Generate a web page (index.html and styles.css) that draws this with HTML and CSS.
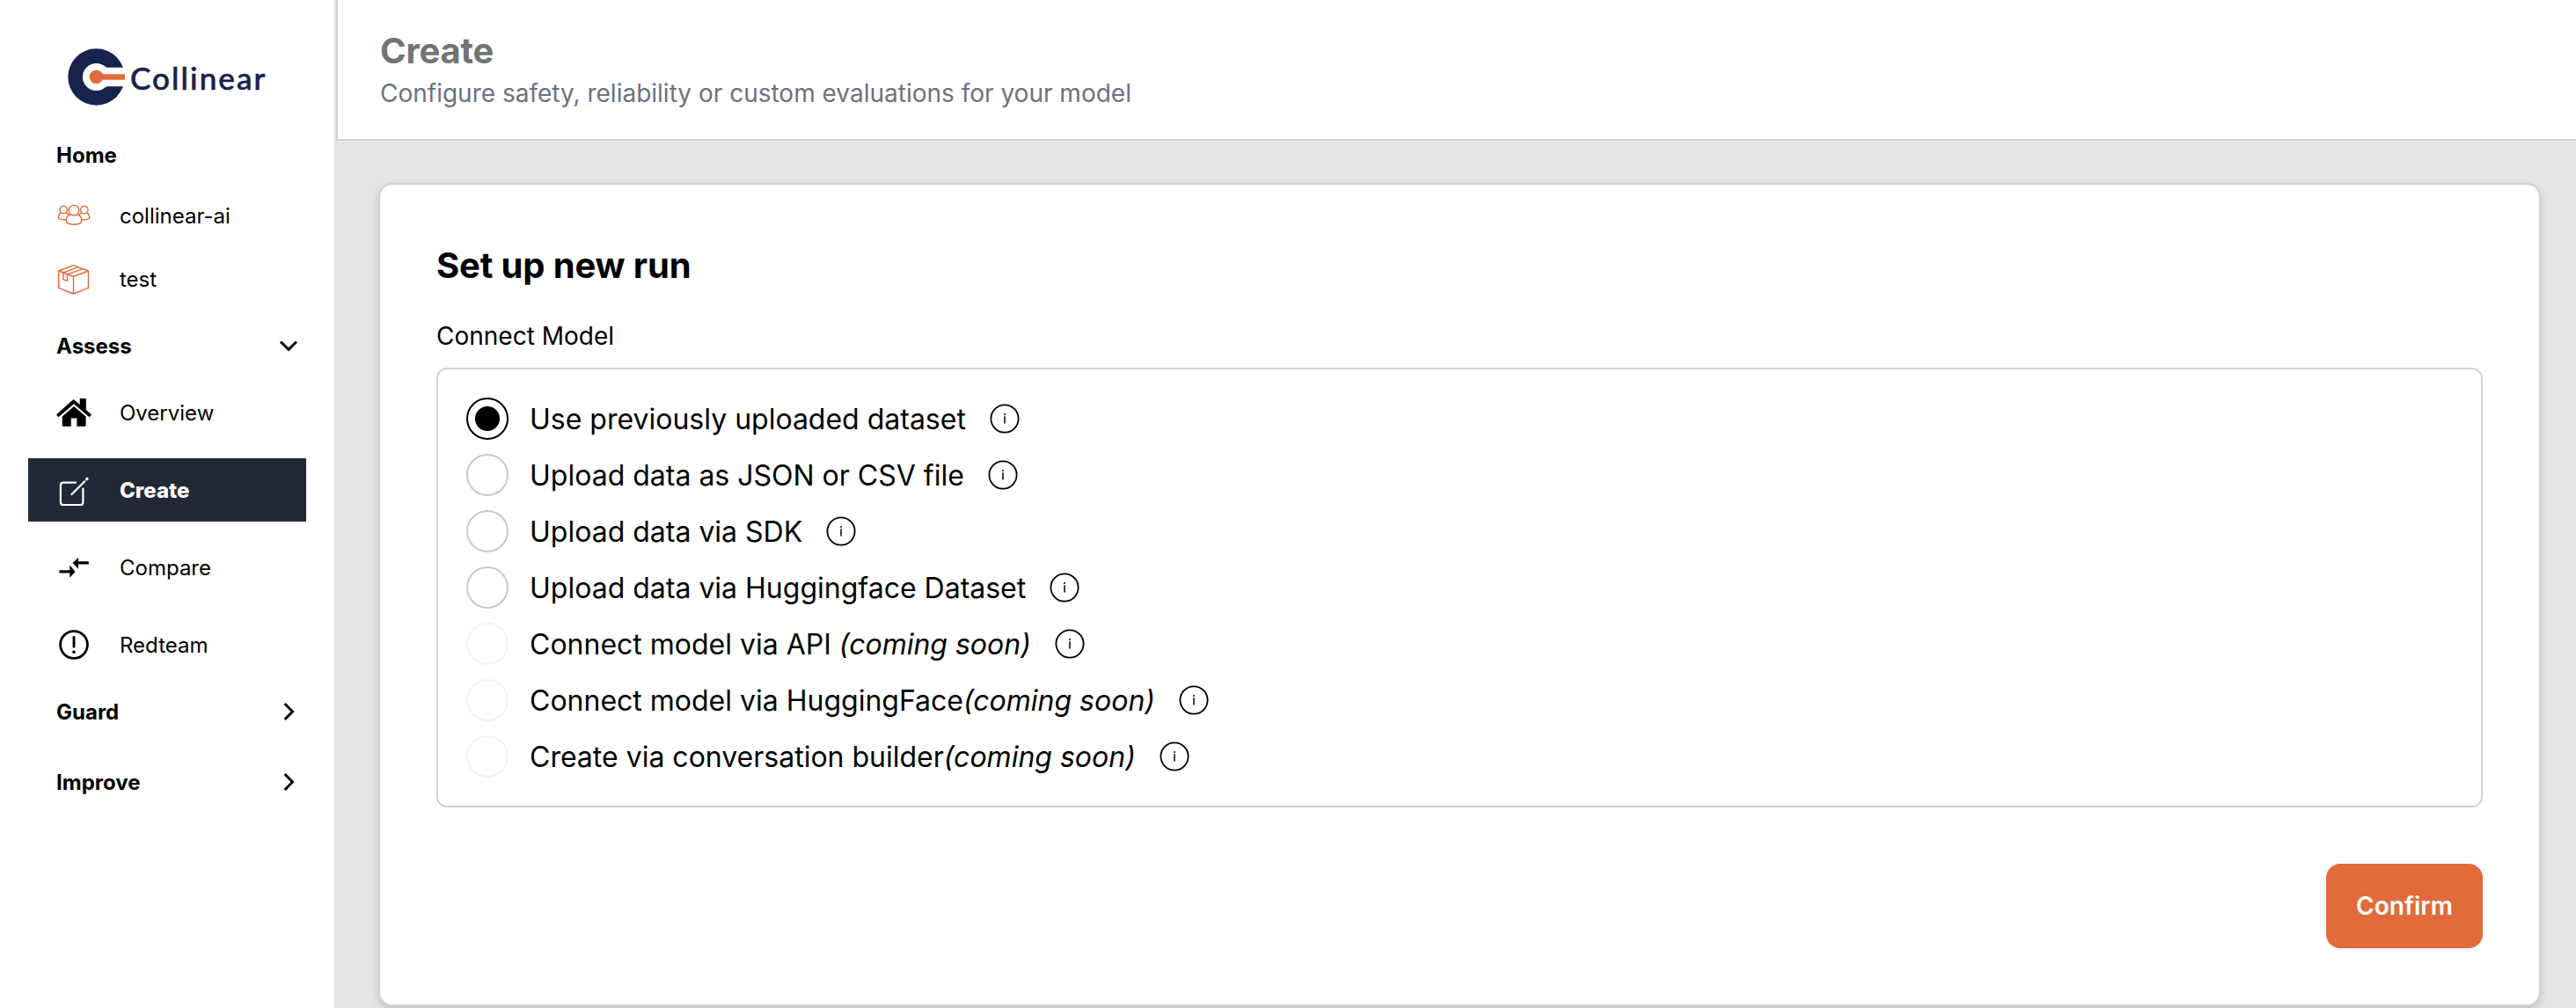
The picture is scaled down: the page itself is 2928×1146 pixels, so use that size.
FILE: index.html
```html
<!DOCTYPE html>
<html lang="en">
<head>
<meta charset="utf-8">
<title>Collinear</title>
<link rel="stylesheet" href="styles.css">
</head>
<body>
<svg class="defs" width="0" height="0">
  <symbol id="info" viewBox="0 0 34 34">
    <circle cx="17" cy="17" r="15.6" fill="none" stroke="currentColor" stroke-width="1.8"/>
    <path d="M17 14.2V22.6" stroke="currentColor" stroke-width="1.5"/>
    <circle cx="17" cy="12" r="1" fill="currentColor"/>
  </symbol>
</svg>
<div class="app">
  <aside class="sidebar">
    <div class="logo">
      <svg width="66" height="66" viewBox="0 0 66 66">
        <circle cx="32.5" cy="32.5" r="32.2" fill="#17234d"/>
        <circle cx="32.5" cy="32.5" r="15.6" fill="#fff"/>
        <path d="M42 20.5L44.5 21.8H66V43.2H44.5L42 44.5Z" fill="#fff"/>
        <circle cx="32.5" cy="32.5" r="7.8" fill="#e16b3a"/>
        <path d="M34 29.3H65V35.7H34Z" fill="#e16b3a"/>
      </svg>
      <span class="wordmark">Collinear</span>
    </div>
    <nav class="nav">
      <div class="group home">Home</div>
      <a class="item">
        <svg class="icon" viewBox="0 0 40 40" fill="none" stroke="#e16b3a" stroke-width="1.4">
          <circle cx="20" cy="14.2" r="5.8"/><circle cx="8.2" cy="13.5" r="4.2"/><circle cx="31.8" cy="13.5" r="4.2"/>
          <path d="M15.8 19C12.8 20.3 11.2 22.6 11.2 25.4C11.2 28.4 14.8 30.2 20 30.2S28.8 28.4 28.8 25.4C28.8 22.6 27.2 20.3 24.2 19"/>
          <path d="M5.4 16.8C3.2 18 2.4 20 2.4 21.9C2.4 24.3 5.4 25 11.2 24.6M11 16.8C12.4 17.4 13.4 18.4 14 19.8M34.6 16.8C36.8 18 37.6 20 37.6 21.9C37.6 24.3 34.6 25 28.8 24.6M29 16.8C27.6 17.4 26.6 18.4 26 19.8"/>
        </svg>
        <span>collinear-ai</span>
      </a>
      <a class="item">
        <svg class="icon" viewBox="0 0 40 40" fill="none" stroke="#e16b3a" stroke-width="1.4" stroke-linejoin="round">
          <path d="M19.4 4.6L36.4 11V30.4L19.5 37L2.6 30.4V11ZM2.6 11L19.5 17.5L36.4 11M19.5 17.5V37"/>
          <path d="M7.8 13V20.6L12.4 22.4V14.8M7.8 13L25 6.7M12.4 14.8L30.4 8.7"/>
        </svg>
        <span>test</span>
      </a>
      <div class="group">Assess
        <svg class="chev" viewBox="0 0 24 24" fill="none" stroke="#000" stroke-width="3"><path d="M3 7.5L12 16.3L21 7.5"/></svg>
      </div>
      <div class="stack">
        <a class="item">
          <svg class="icon" viewBox="0 0 40 40">
            <path d="M20 6.8L26.7 12.6V5.6H33.8V18.7L40 24L37.5 26.8L20 11.9L2.5 26.8L0 24L18.3 7.6Q20 6 21 7.5Z" transform="translate(0 -1.6)"/>
            <path d="M20 13L33.6 24.6V34.6Q33.6 35.8 32.4 35.8H23.4V26.6H16.8V35.8H8Q6.8 35.8 6.8 34.6V24.6Z"/>
          </svg>
          <span>Overview</span>
        </a>
        <a class="item active">
          <svg class="icon" viewBox="0 0 40 40" fill="none" stroke="#fff" stroke-width="2.2" stroke-linecap="round">
            <path d="M22 11.7H8Q4.9 11.7 4.9 14.8V33.9Q4.9 37 8 37H27.3Q30.4 37 30.4 33.9V18.5"/>
            <path d="M17.5 25L32.3 10.2"/><path d="M34.6 7.7L35 7.3" stroke-width="2.8" stroke-linecap="square"/>
          </svg>
          <span>Create</span>
        </a>
        <a class="item">
          <svg class="icon" viewBox="0 0 40 40"><path d="M3.4 23.2H15.3V17.6L21.6 25L15.3 31.7V26.6H3.4ZM36.8 13.2V16.6H24.9V21.7L18.6 15L24.9 9V13.2Z" /></svg>
          <span>Compare</span>
        </a>
        <a class="item">
          <svg class="icon" viewBox="0 0 40 40" fill="none" stroke="#000" stroke-width="2.8"><circle cx="20" cy="20" r="15.4"/><path d="M20 11.5V22.3" stroke-linecap="round"/><circle cx="20" cy="28.2" r="1.8" fill="#000" stroke="none"/></svg>
          <span>Redteam</span>
        </a>
      </div>
      <div class="group">Guard
        <svg class="chev" viewBox="0 0 24 24" fill="none" stroke="#000" stroke-width="3"><path d="M7.7 3L16.5 12L7.7 21"/></svg>
      </div>
      <div class="group">Improve
        <svg class="chev" viewBox="0 0 24 24" fill="none" stroke="#000" stroke-width="3"><path d="M7.7 3L16.5 12L7.7 21"/></svg>
      </div>
    </nav>
  </aside>
  <main class="main">
    <header class="header">
      <h1>Create</h1>
      <p>Configure safety, reliability or custom evaluations for your model</p>
    </header>
    <section class="card">
      <h2>Set up new run</h2>
      <div class="label">Connect Model</div>
      <div class="options">
        <label class="option"><span class="radio checked"></span><span>Use previously uploaded dataset</span><svg class="info"><use href="#info"/></svg></label>
        <label class="option"><span class="radio"></span><span>Upload data as JSON or CSV file</span><svg class="info"><use href="#info"/></svg></label>
        <label class="option"><span class="radio"></span><span>Upload data via SDK</span><svg class="info"><use href="#info"/></svg></label>
        <label class="option"><span class="radio"></span><span>Upload data via Huggingface Dataset</span><svg class="info"><use href="#info"/></svg></label>
        <label class="option"><span class="radio disabled"></span><span>Connect model via API <i>(coming soon)</i></span><svg class="info"><use href="#info"/></svg></label>
        <label class="option"><span class="radio disabled"></span><span>Connect model via HuggingFace<i>(coming soon)</i></span><svg class="info"><use href="#info"/></svg></label>
        <label class="option"><span class="radio disabled"></span><span>Create via conversation builder<i>(coming soon)</i></span><svg class="info"><use href="#info"/></svg></label>
      </div>
      <div class="actions"><button class="confirm">Confirm</button></div>
    </section>
  </main>
</div>
</body>
</html>
```
FILE: styles.css
```css
* { box-sizing: border-box; }
body { margin: 0; font-family: Inter, "Liberation Sans", sans-serif; color: #000; }
h1, h2, p { margin: 0; }
.defs { display: block; }
.app { display: flex; height: 1146px; overflow: hidden; background: #e4e6e5; }
.sidebar { width: 382px; flex: none; background: #fff; border-right: 2px solid #e5e7eb; }
.logo { height: 143px; padding: 55px 0 0 77px; display: flex; align-items: flex-start; }
.logo svg { flex: none; }
.wordmark { margin-left: 5px; font: 500 35px/66px Lato, sans-serif; letter-spacing: 2.1px; color: #17234d; -webkit-text-stroke: .6px #17234d; }
.nav { padding: 0 32px; }
.group { height: 80px; padding: 0 8px 0 32px; display: flex; align-items: center; justify-content: space-between; font-size: 24px; font-weight: 700; }
.group.home { height: 66px; }
.chev { width: 24px; height: 24px; }
.item { height: 72px; padding-left: 32px; display: flex; align-items: center; gap: 32px; font-size: 24px; }
.icon { width: 40px; height: 40px; flex: none; }
.stack { display: flex; flex-direction: column; gap: 16px; }
.active { background: #222936; color: #fff; font-weight: 800; }
.main { flex: 1; min-width: 0; }
.header { height: 160px; padding: 34px 0 0 48px; background: #fff; border-left: 2px solid #d1d1d1; border-bottom: 2px solid #d1d1d1; }
.header h1 { font-size: 40px; line-height: 48px; font-weight: 700; letter-spacing: -.2px; color: #737373; }
.header p { font-size: 28px; line-height: 48px; color: #6b7280; }
.card { margin: 48px 40px 0 48px; height: 936px; padding: 62px 64px 0; background: #fff; border: 2px solid #d1d1d1; border-radius: 16px; box-shadow: 0 4px 8px rgba(0,0,0,.15); }
.card h2 { font-size: 40px; line-height: 60px; font-weight: 700; letter-spacing: -.15px; }
.label { margin-top: 28px; font-size: 28px; line-height: 44px; }
.options { margin-top: 14px; height: 500px; padding: 24px 32px; border: 2px solid #d1d1d1; border-radius: 12px; }
.option { height: 64px; display: flex; align-items: center; font-size: 32px; white-space: pre; }
.radio { width: 48px; height: 48px; margin-right: 24px; border: 2px solid #c9c9c9; border-radius: 50%; flex: none; }
.radio.checked { border-color: #000; background: radial-gradient(circle, #000 13.5px, transparent 14.5px); }
.radio.disabled { border-color: #f3f3f3; }
.info { width: 34px; height: 34px; margin-left: 27px; flex: none; }
.actions { margin-top: 64px; display: flex; justify-content: flex-end; }
.confirm { width: 178px; height: 96px; border: 0; border-radius: 16px; background: #e16b3a; color: #fff; font: 600 28px Inter, sans-serif; box-shadow: 0 2px 4px rgba(0,0,0,.05); }
```
